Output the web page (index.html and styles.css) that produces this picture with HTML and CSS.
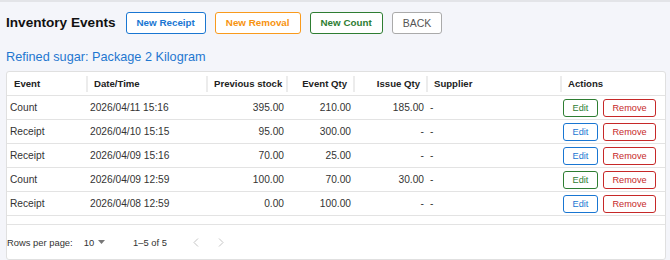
FILE: index.html
```html
<!DOCTYPE html>
<html>
<head>
<meta charset="utf-8">
<link rel="stylesheet" href="styles.css">
</head>
<body>
<div class="page">
  <div class="topbar">
    <h1 class="title">Inventory Events</h1>
    <button class="btn btn-blue">New Receipt</button>
    <button class="btn btn-orange">New Removal</button>
    <button class="btn btn-green">New Count</button>
    <button class="btn btn-gray">BACK</button>
  </div>
  <div class="subtitle">Refined sugar: Package 2 Kilogram</div>
  <div class="card">
    <table class="grid">
      <colgroup>
        <col class="c-event"><col class="c-date"><col class="c-prev"><col class="c-eqty"><col class="c-iqty"><col class="c-supp"><col class="c-act">
      </colgroup>
      <thead>
        <tr>
          <th class="sep">Event</th>
          <th class="sep">Date/Time</th>
          <th class="sep num">Previous stock</th>
          <th class="sep num">Event Qty</th>
          <th class="sep num">Issue Qty</th>
          <th class="sep">Supplier</th>
          <th>Actions</th>
        </tr>
      </thead>
      <tbody>
        <tr>
          <td>Count</td><td>2026/04/11 15:16</td><td class="num">395.00</td><td class="num">210.00</td><td class="num">185.00</td><td>-</td>
          <td class="act"><button class="sbtn s-green">Edit</button><button class="sbtn s-red">Remove</button></td>
        </tr>
        <tr>
          <td>Receipt</td><td>2026/04/10 15:15</td><td class="num">95.00</td><td class="num">300.00</td><td class="num">-</td><td>-</td>
          <td class="act"><button class="sbtn s-blue">Edit</button><button class="sbtn s-red">Remove</button></td>
        </tr>
        <tr>
          <td>Receipt</td><td>2026/04/09 15:16</td><td class="num">70.00</td><td class="num">25.00</td><td class="num">-</td><td>-</td>
          <td class="act"><button class="sbtn s-blue">Edit</button><button class="sbtn s-red">Remove</button></td>
        </tr>
        <tr>
          <td>Count</td><td>2026/04/09 12:59</td><td class="num">100.00</td><td class="num">70.00</td><td class="num">30.00</td><td>-</td>
          <td class="act"><button class="sbtn s-green">Edit</button><button class="sbtn s-red">Remove</button></td>
        </tr>
        <tr>
          <td>Receipt</td><td>2026/04/08 12:59</td><td class="num">0.00</td><td class="num">100.00</td><td class="num">-</td><td>-</td>
          <td class="act"><button class="sbtn s-blue">Edit</button><button class="sbtn s-red">Remove</button></td>
        </tr>
      </tbody>
    </table>
    <div class="spacer"></div>
    <div class="footer">
      <span class="rpp">Rows per page:</span>
      <span class="select">10<svg class="caret" width="7" height="4" viewBox="0 0 7 4"><path d="M0 0h7L3.5 4z" fill="#777"/></svg></span>
      <span class="range">1–5 of 5</span>
      <svg class="nav" width="6" height="9" viewBox="0 0 6 9"><path d="M5 0.5L1 4.5L5 8.5" fill="none" stroke="#c4c4c4" stroke-width="1"/></svg>
      <svg class="nav nav-next" width="6" height="9" viewBox="0 0 6 9"><path d="M1 0.5L5 4.5L1 8.5" fill="none" stroke="#c4c4c4" stroke-width="1"/></svg>
    </div>
  </div>
</div>
</body>
</html>
```
FILE: styles.css
```css
* { box-sizing: border-box; }
html, body {
  margin: 0;
  padding: 0;
  background: #f4f5fa;
  font-family: "Liberation Sans", Arial, sans-serif;
}
.page {
  border-top: 2px solid #e3e4e8;
  padding: 10px 4px 0 6px;
  height: 260px;
}
.topbar {
  display: flex;
  align-items: center;
  gap: 9px;
  height: 22px;
}
.title {
  margin: 0 1px 0 0;
  font-size: 13.6px;
  font-weight: bold;
  color: #111;
  line-height: 22px;
}
.btn {
  height: 22px;
  padding: 0 10px;
  background: #fff;
  border: 1px solid;
  border-radius: 3px;
  font-family: "Liberation Sans", Arial, sans-serif;
  font-size: 9.8px;
  font-weight: bold;
  line-height: 20px;
  cursor: pointer;
}
.btn-blue { color: #1976d2; border-color: #1976d2; }
.btn-orange { color: #f7930f; border-color: #f99a1c; }
.btn-green { color: #2e7d32; border-color: #2e7d32; }
.btn-gray { color: #555; border-color: #aaa; font-weight: normal; font-size: 10.5px; }
.subtitle {
  margin-top: 15px;
  height: 16px;
  line-height: 16px;
  font-size: 12.7px;
  color: #1f77d0;
}
.card {
  margin-top: 6px;
  background: #fff;
  border: 1px solid #e0e0e0;
  border-radius: 3px;
}
.grid {
  width: 100%;
  table-layout: fixed;
  border-collapse: separate;
  border-spacing: 0;
}
.c-event { width: 80px; }
.c-date { width: 120px; }
.c-prev { width: 80px; }
.c-eqty { width: 67px; }
.c-iqty { width: 73px; }
.c-supp { width: 134px; }
.c-act { width: 104px; }
.grid th {
  position: relative;
  height: 24px;
  padding: 0 7px 0 7px;
  text-align: left;
  font-size: 9.6px;
  font-weight: bold;
  color: #222;
  border-bottom: 1px solid #e3e3e3;
  white-space: nowrap;
}
.grid th.num { text-align: right; }
.grid th.sep::after {
  content: "";
  position: absolute;
  right: -1px;
  top: 4px;
  bottom: 3px;
  width: 2px;
  background: #ececec;
}
.grid td {
  height: 24px;
  padding: 0 3px;
  font-size: 10.2px;
  color: #333;
  border-bottom: 1px solid #e3e3e3;
  white-space: nowrap;
}
.grid td.num { text-align: right; }
.grid td.act { padding-left: 2px; }
.sbtn {
  display: inline-block;
  vertical-align: middle;
  height: 18px;
  padding: 0;
  background: #fff;
  border: 1px solid;
  border-radius: 3px;
  font-family: "Liberation Sans", Arial, sans-serif;
  font-size: 9.2px;
  line-height: 16px;
  text-align: center;
  cursor: pointer;
}
.sbtn + .sbtn { margin-left: 5px; }
.s-green { width: 35px; color: #2e7d32; border-color: #2e7d32; }
.s-blue { width: 35px; color: #1976d2; border-color: #1976d2; }
.s-red { width: 53px; color: #c62828; border-color: #c62828; }
.spacer { height: 8px; }
.footer {
  display: flex;
  align-items: center;
  height: 35px;
  border-top: 1px solid #e3e3e3;
  font-size: 9.4px;
  color: #333;
}
.select {
  display: inline-flex;
  align-items: center;
  margin-left: 11px;
}
.caret { margin-left: 4px; }
.range { margin-left: 28px; }
.nav { margin-left: 26px; }
.nav-next { margin-left: 19px; }
```
